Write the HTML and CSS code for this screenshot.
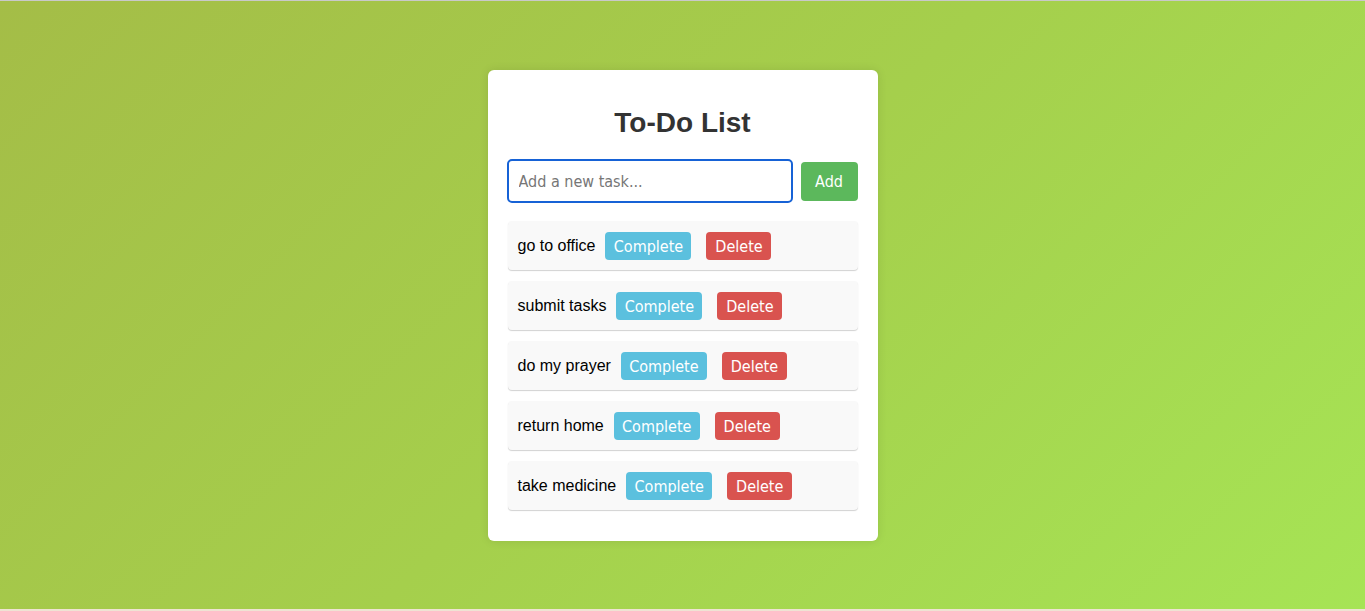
FILE: index.html
```html
<!DOCTYPE html>
<html lang="en">
<head>
<meta charset="utf-8">
<title>To-Do List</title>
<link rel="stylesheet" href="styles.css">
</head>
<body>
<div class="card">
  <h1 class="title">To-Do List</h1>
  <div class="entry">
    <input class="task-input" type="text" placeholder="Add a new task...">
    <button class="btn btn-add">Add</button>
  </div>
  <ul class="tasks">
    <li class="task"><span class="task-text">go to office</span><button class="btn btn-complete">Complete</button><button class="btn btn-delete">Delete</button></li>
    <li class="task"><span class="task-text">submit tasks</span><button class="btn btn-complete">Complete</button><button class="btn btn-delete">Delete</button></li>
    <li class="task"><span class="task-text">do my prayer</span><button class="btn btn-complete">Complete</button><button class="btn btn-delete">Delete</button></li>
    <li class="task"><span class="task-text">return home</span><button class="btn btn-complete">Complete</button><button class="btn btn-delete">Delete</button></li>
    <li class="task"><span class="task-text">take medicine</span><button class="btn btn-complete">Complete</button><button class="btn btn-delete">Delete</button></li>
  </ul>
</div>
</body>
</html>
```
FILE: styles.css
```css
html {
  height: 100%;
}
body {
  margin: 0;
  min-height: 100%;
  box-sizing: border-box;
  border-top: 1px solid #c9c9c9;
  border-bottom: 2px solid #efe3d3;
  background: linear-gradient(135deg, #a4bd47 0%, #a5cf4c 50%, #a6e455 100%);
  font-family: "Liberation Sans", Arial, sans-serif;
  display: flex;
  justify-content: center;
  padding-top: 69px;
}
.card {
  width: 350px;
  height: 431px;
  padding: 20px;
  background: #fff;
  border-radius: 6px;
  box-shadow: 0 0 10px rgba(0, 0, 0, 0.1);
}
.title {
  margin: 17px 0 20px;
  font-size: 28px;
  line-height: 32px;
  text-align: center;
  color: #333;
}
.entry {
  display: flex;
  align-items: center;
  gap: 8px;
  margin-bottom: 18px;
}
.task-input {
  flex: 1;
  box-sizing: border-box;
  height: 44px;
  margin-left: -1px;
  padding: 0 10px;
  border: 2px solid #1662d6;
  border-radius: 5px;
  outline: none;
  font-family: "DejaVu Sans Condensed", "DejaVu Sans", sans-serif;
  font-size: 16px;
  color: #333;
}
.task-input::placeholder {
  color: #767676;
}
.btn {
  border: none;
  border-radius: 4px;
  color: #fff;
  font-family: "DejaVu Sans Condensed", "DejaVu Sans", sans-serif;
  font-size: 16px;
  cursor: pointer;
}
.btn-add {
  width: 57px;
  height: 39px;
  background: #5cb85c;
}
.tasks {
  list-style: none;
  margin: 0;
  padding: 0;
  display: flex;
  flex-direction: column;
  gap: 11px;
}
.task {
  display: flex;
  align-items: center;
  height: 49px;
  box-sizing: border-box;
  padding: 1px 10px 0;
  background: #f9f9f9;
  border-radius: 4px;
  box-shadow: 0 1px 1px rgba(0, 0, 0, 0.18);
}
.task-text {
  font-size: 16px;
  color: #000;
}
.btn-complete {
  margin-left: 10px;
  width: 86px;
  height: 28px;
  background: #5bc0de;
}
.btn-delete {
  margin-left: 15px;
  width: 65px;
  height: 28px;
  background: #d9534f;
}
```
